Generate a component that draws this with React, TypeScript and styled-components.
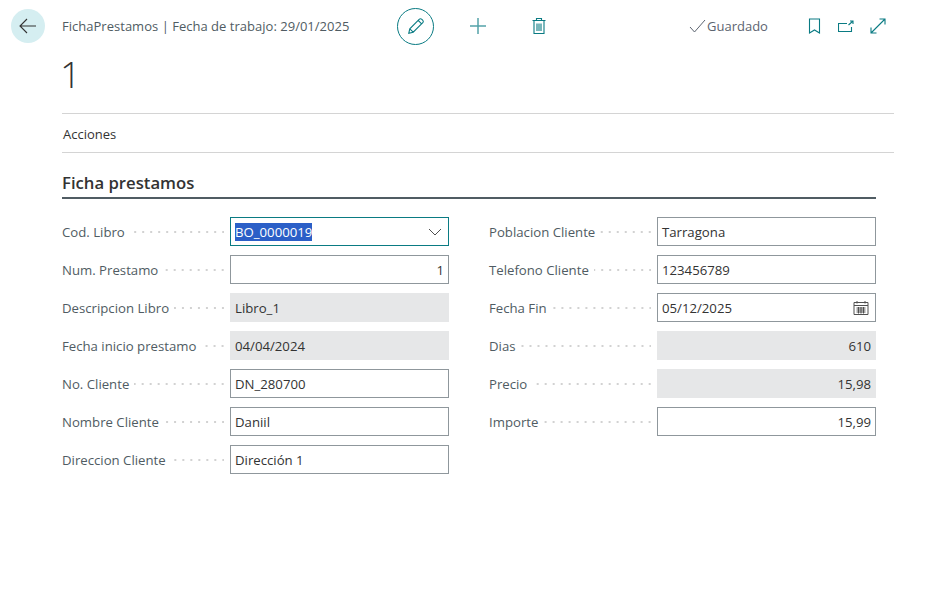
import React from 'react';
import styled, { createGlobalStyle } from 'styled-components';

const Global = createGlobalStyle`
  html, body { margin: 0; padding: 0; background: #fff; }
  body { font-family: "Open Sans", "Liberation Sans", sans-serif; color: #333; }
`;
const Page = styled.div`
  width: 952px; height: 601px; overflow: hidden; display: flex; flex-direction: column;
  padding: 7px 58px 0 11px; box-sizing: border-box;
`;
const TopBar = styled.div`display: flex; align-items: center; height: 38px;`;
const BackButton = styled.div`
  width: 34px; height: 34px; border-radius: 50%; background: #d5eef1;
  display: flex; align-items: center; justify-content: center; color: #333; margin-right: 17px;
`;
const Caption = styled.div`font-size: 13px; letter-spacing: 0.02px; color: #505c63; width: 335px; white-space: nowrap;`;
const EditCircle = styled.div`
  width: 37px; height: 37px; border-radius: 50%; border: 1px solid #0a7b83; box-sizing: border-box;
  display: flex; align-items: center; justify-content: center; color: #0a7b83;
`;
const ToolIcon = styled.div<{ $ml: number }>`display: flex; margin-left: ${p => p.$ml}px; color: #0a7b83;`;
const Saved = styled.div`
  display: flex; align-items: center; gap: 1px; font-size: 13px; color: #5c6470; margin-left: 143px; width: 119px;
`;
const Body = styled.div`margin-left: 51px; display: flex; flex-direction: column;`;
const Title = styled.div`font-size: 37px; font-weight: 300; line-height: 52px; height: 65px; color: #333; margin: 3px 0 0 -2px;`;
const ActionBar = styled.div`
  border-top: 1px solid #d4d4d4; border-bottom: 1px solid #d4d4d4; height: 37px; display: flex;
  align-items: center; font-size: 13px; color: #333; padding: 1px 0 0 1px;
`;
const Section = styled.div`width: 814px; margin-top: 20px;`;
const SectionTitle = styled.div`
  font-size: 16.7px; font-weight: 600; color: #333; border-bottom: 2px solid #505c63; height: 24px; line-height: 19px;
`;
const Columns = styled.div`display: grid; grid-template-columns: 387px 387px; column-gap: 40px; margin-top: 18px;`;
const Column = styled.div`display: flex; flex-direction: column; gap: 9px;`;
const Row = styled.div`display: flex; align-items: center; height: 29px;`;
const Label = styled.div`font-size: 13.2px; color: #505c63; white-space: nowrap; margin-right: 5px;`;
const Dots = styled.div`
  flex: 1; height: 2px; margin: 1px 6px 0 0;
  background-image: linear-gradient(to right, #d2d2d2 2px, transparent 2px);
  background-size: 8px 2px;
  background-position: right -6px center;
`;
const Field = styled.div<{ $ro?: boolean; $right?: boolean; $focus?: boolean }>`
  width: 219px; height: 29px; box-sizing: border-box; flex: none;
  border: 1px solid ${p => (p.$focus ? '#0a7b83' : p.$ro ? '#e6e7e8' : '#8f979c')};
  background: ${p => (p.$ro ? '#e6e7e8' : '#fff')};
  display: flex; align-items: center; justify-content: ${p => (p.$right ? 'flex-end' : 'space-between')};
  padding: 0 4px; font-size: 13.2px; color: #333;
`;
const Selected = styled.span`background: #2b5fc7; color: #fff; line-height: 18px;`;
const FieldIcon = styled.svg<{ $mr: number }>`flex: none; margin-right: ${p => p.$mr}px;`;

type F = { l: string; v: string; ro?: boolean; right?: boolean };
const left: F[] = [
  { l: 'Num. Prestamo', v: '1', right: true },
  { l: 'Descripcion Libro', v: 'Libro_1', ro: true },
  { l: 'Fecha inicio prestamo', v: '04/04/2024', ro: true },
  { l: 'No. Cliente', v: 'DN_280700' },
  { l: 'Nombre Cliente', v: 'Daniil' },
  { l: 'Direccion Cliente', v: 'Dirección 1' },
];
const right: F[] = [
  { l: 'Poblacion Cliente', v: 'Tarragona' },
  { l: 'Telefono Cliente', v: '123456789' },
];
const right2: F[] = [
  { l: 'Dias', v: '610', ro: true, right: true },
  { l: 'Precio', v: '15,98', ro: true, right: true },
  { l: 'Importe', v: '15,99', right: true },
];
const FieldRow = ({ f }: { f: F }) => (
  <Row>
    <Label>{f.l}</Label>
    <Dots />
    <Field $ro={f.ro} $right={f.right}>{f.v}</Field>
  </Row>
);

export default function App() {
  return (
    <Page>
      <Global />
      <TopBar>
        <BackButton>
          <svg width="20" height="20" viewBox="0 0 20 20" fill="none" stroke="#333" strokeWidth="1.1"><path d="M2 10h16M9 3l-7 7 7 7" /></svg>
        </BackButton>
        <Caption>FichaPrestamos | Fecha de trabajo: 29/01/2025</Caption>
        <EditCircle>
          <svg width="18" height="18" viewBox="0 0 18 18" fill="none" stroke="currentColor" strokeWidth="1.1"><path d="M1.8 16.2l1-4.4L12.4 2.2a1.5 1.5 0 0 1 2.2 0l1.2 1.2a1.5 1.5 0 0 1 0 2.2L6.2 15.2zM2.8 11.8l3.4 3.4M11.2 3.4l3.4 3.4" /></svg>
        </EditCircle>
        <ToolIcon $ml={35}>
          <svg width="18" height="18" viewBox="0 0 18 18" fill="none" stroke="currentColor" strokeOpacity="0.7" strokeWidth="1.5"><path d="M9 1v16M1 9h16" /></svg>
        </ToolIcon>
        <ToolIcon $ml={45}>
          <svg width="14" height="18" viewBox="0 0 14 18" fill="none" stroke="currentColor" strokeWidth="1.1"><path d="M0.5 3.5h13M4.5 3.5V1.5h5v2M2 3.5v13h10v-13M5 6.5v7.5M7 6.5v7.5M9 6.5v7.5" /></svg>
        </ToolIcon>
        <Saved>
          <svg width="17" height="14" viewBox="0 0 17 14" fill="none" stroke="#5c6470" strokeWidth="1"><path d="M1 8l4.5 5L16 1" /></svg>
          Guardado
        </Saved>
        <ToolIcon $ml={0}>
          <svg width="13" height="16" viewBox="0 0 13 16" fill="none" stroke="currentColor" strokeWidth="1.1"><path d="M1.5 1h10v14l-5-3-5 3z" /></svg>
        </ToolIcon>
        <ToolIcon $ml={17}>
          <svg width="16" height="14" viewBox="0 0 16 14" fill="none" stroke="currentColor" strokeWidth="1.1"><path d="M9 4.5H.5v8h13V8M10.5 6L14.5 2.5M12 2h3v3" /></svg>
        </ToolIcon>
        <ToolIcon $ml={16}>
          <svg width="16" height="16" viewBox="0 0 16 16" fill="none" stroke="currentColor" strokeWidth="1.1"><path d="M1 15L15 1M9.5 1H15v5.5M1 9.5V15h5.5" /></svg>
        </ToolIcon>
      </TopBar>
      <Body>
        <Title>1</Title>
        <ActionBar>Acciones</ActionBar>
        <Section>
          <SectionTitle>Ficha prestamos</SectionTitle>
          <Columns>
            <Column>
              <Row>
                <Label>Cod. Libro</Label>
                <Dots />
                <Field $focus>
                  <Selected>BO_0000019</Selected>
                  <FieldIcon $mr={2} width="14" height="8" viewBox="0 0 14 8" fill="none" stroke="#505050" strokeWidth="1"><path d="M1 1l6 6 6-6" /></FieldIcon>
                </Field>
              </Row>
              {left.map(f => <FieldRow key={f.l} f={f} />)}
            </Column>
            <Column>
              {right.map(f => <FieldRow key={f.l} f={f} />)}
              <Row>
                <Label>Fecha Fin</Label>
                <Dots />
                <Field>
                  05/12/2025
                  <FieldIcon $mr={2} width="16" height="16" viewBox="0 0 16 16" fill="none" stroke="#505050" strokeWidth="1"><path d="M1 2.5h14v12H1zM1 5.5h14M4 1v2.5M12 1v2.5M3.5 8h9M3.5 10h9M3.5 12h9M5.5 7v6.5M8 7v6.5M10.5 7v6.5" /></FieldIcon>
                </Field>
              </Row>
              {right2.map(f => <FieldRow key={f.l} f={f} />)}
            </Column>
          </Columns>
        </Section>
      </Body>
    </Page>
  );
}
